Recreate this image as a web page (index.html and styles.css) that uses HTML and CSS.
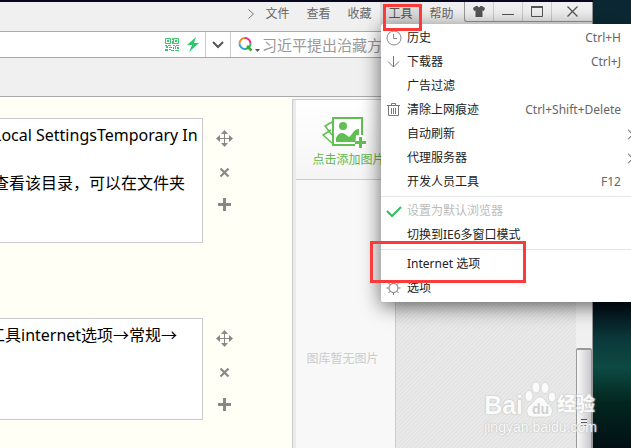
FILE: index.html
```
<!DOCTYPE html>
<html lang="zh-CN">
<head>
	<meta charset="utf-8">
	<title>Internet 选项</title>
	<link rel="stylesheet" href="styles.css">
</head>
<body>
	<svg class="symbols" width="0" height="0">
		<symbol id="move" viewBox="0 0 17 17">
			<path d="M8 3h1v11H8zM3 8h11v1H3zM8.500 0L12 4H5zM8.500 17L5 13h7zM0 8.500L4 5v7zM17 8.500L13 12V5z" fill="#888"/>
		</symbol>
		<symbol id="remove" viewBox="0 0 17 17">
			<path d="M4.500 5.500l8 8M12.500 5.500l-8 8" stroke="#888" stroke-width="2.200"/>
		</symbol>
		<symbol id="add" viewBox="0 0 17 17">
			<path d="M7 2h3v5h5v3h-5v5H7v-5H2V7h5z" fill="#888"/>
		</symbol>
	</svg>

	<div class="window">
		<header class="titlebar">
			<nav class="menubar">
				<svg class="more" width="8" height="12" viewBox="0 0 8 12"><path d="M1.500 1.500L6.500 6l-5 4.500" fill="none" stroke="#777"/></svg>
				<button>文件</button>
				<button>查看</button>
				<button>收藏</button>
				<button class="active">工具</button>
				<button>帮助</button>
			</nav>
			<div class="controls">
				<button aria-label="皮肤"><svg width="12" height="11" viewBox="0 0 12 11"><path d="M3 0h1.500L6 1.500 7.500 0H9l3 2-1 3-1.500-.5V11h-7V4.500L1 5 0 2z" fill="#555"/></svg></button>
				<button aria-label="最小化"><svg width="12" height="11" viewBox="0 0 12 11"><path d="M0 8.500h12" stroke="#555"/></svg></button>
				<button aria-label="最大化"><svg width="12" height="11" viewBox="0 0 12 11"><path d="M.5 1v9.500h11V1M0 1h12" fill="none" stroke="#555"/><path d="M0 1h12" stroke="#555" stroke-width="2"/></svg></button>
				<button aria-label="关闭"><svg width="11" height="11" viewBox="0 0 11 11"><path d="M.5.5l10 10M10.500.5l-10 10" stroke="#555" stroke-width="1.300"/></svg></button>
			</div>
		</header>

		<div class="addressbar">
			<button class="tool" aria-label="二维码">
				<svg width="14" height="13" viewBox="0 0 14 13">
					<path d="M.5.5h5v5h-5zM8.500.5h5v5h-5z" fill="none" stroke="#3ac569"/>
					<path d="M2 2h2v2H2zM10 2h2v2h-2zM0 7h2v1H0zM3 7h3v1H3zM7 0h1v2H7zM7 3h1v3H7zM8 7h2v1H8zM11 7h3v1h-3zM1 8h2v2H1zM4 9h3v1H4zM8 9h1v2H8zM10 8h1v3h-1zM12 9h2v2h-2zM0 11h3v2H0zM4 11h2v1H4zM6 12h3v1H6zM10 12h4v1h-4z" fill="#3ac569"/>
				</svg>
			</button>
			<button class="tool" aria-label="极速模式">
				<svg width="12" height="15" viewBox="0 0 12 15"><path d="M9 0L0 8h5L2 15l10-9H7z" fill="#2dc76d"/></svg>
			</button>
			<button class="dropdown" aria-label="展开">
				<svg width="12" height="8" viewBox="0 0 12 8"><path d="M1 1l5 5 5-5" fill="none" stroke="#555" stroke-width="2"/></svg>
			</button>
			<label class="search">
				<svg width="22" height="15" viewBox="0 0 22 15">
					<g fill="none" stroke-width="2">
						<path d="M7 1a5.500 5.500 0 0 1 5.500 5.500" stroke="#e0308a"/>
						<path d="M12.500 6.500A5.500 5.500 0 0 1 7 12" stroke="#30b34a"/>
						<path d="M7 12a5.500 5.500 0 0 1-5.500-5.500" stroke="#29a4e8"/>
						<path d="M1.500 6.500A5.500 5.500 0 0 1 7 1" stroke="#f58220"/>
						<path d="M9 9l4.500 4.500" stroke="#3aa935" stroke-width="2.500"/>
					</g>
					<path d="M17 12h5l-2.500 3z" fill="#555"/>
				</svg>
				<input type="text" aria-label="搜索" placeholder="习近平提出治藏方略">
			</label>
		</div>
		<div class="toolbar"></div>

		<main class="content">
			<section class="editor">
				<div class="step">
					<textarea class="first" aria-label="步骤一" wrap="off">Local SettingsTemporary In

查看该目录，可以在文件夹</textarea>
					<div class="actions">
						<button aria-label="移动"><svg width="17" height="17"><use href="#move"/></svg></button>
						<button aria-label="删除"><svg width="17" height="17"><use href="#remove"/></svg></button>
						<button aria-label="添加"><svg width="17" height="17"><use href="#add"/></svg></button>
					</div>
				</div>
				<div class="step">
					<textarea class="second" aria-label="步骤二" wrap="off">工具internet选项→常规→</textarea>
					<div class="actions">
						<button aria-label="移动"><svg width="17" height="17"><use href="#move"/></svg></button>
						<button aria-label="删除"><svg width="17" height="17"><use href="#remove"/></svg></button>
						<button aria-label="添加"><svg width="17" height="17"><use href="#add"/></svg></button>
					</div>
				</div>
			</section>

			<aside class="gallery">
				<button class="upload">
					<svg width="44" height="32" viewBox="0 0 44 32">
						<path d="M10 6L3 10l7 9M9 14L1 19l9 8" fill="none" stroke="#5fbf50" stroke-width="1.500"/>
						<path d="M11 2h29v27H11z" fill="#fff" stroke="#5fbf50" stroke-width="2"/>
						<circle cx="21" cy="10" r="4" fill="#5fbf50"/>
						<path d="M14 26v-4c2-5 6-6 9-4l4 3c3-1 4-8 10-8v13z" fill="#5fbf50"/>
						<path d="M34 19h9v13H33z" fill="#fff"/>
						<path d="M37 21h3v4h4v3h-4v4h-3v-4h-4v-3h4z" fill="#5fbf50"/>
					</svg>
					<span>点击添加图片</span>
				</button>
				<p class="empty">图库暂无图片</p>
			</aside>

			<div class="canvas"></div>
			<div class="scrollbar"><div class="thumb"><i></i></div></div>
		</main>
	</div>

	<div class="menu" role="menu">
		<button><svg width="16" height="16" viewBox="0 0 16 16"><circle cx="8" cy="8" r="7" fill="none" stroke="#888"/><path d="M7.500 4v4.500H11" fill="none" stroke="#888"/></svg><span>历史</span><kbd>Ctrl+H</kbd></button>
		<button><svg width="16" height="16" viewBox="0 0 16 16"><path d="M7.500 2v11M2 7.500l5.500 5.500L13 7.500" fill="none" stroke="#777"/></svg><span>下载器</span><kbd>Ctrl+J</kbd></button>
		<button><span>广告过滤</span></button>
		<button><svg width="16" height="16" viewBox="0 0 16 16"><path d="M1 3.500h13M5.500 3V1.500h4V3M2.500 4v9.500h10V4M5.500 6v6M7.500 6v6M9.500 6v6" fill="none" stroke="#777"/></svg><span>清除上网痕迹</span><kbd>Ctrl+Shift+Delete</kbd></button>
		<button class="sub"><span>自动刷新</span></button>
		<button class="sub"><span>代理服务器</span></button>
		<button><span>开发人员工具</span><kbd>F12</kbd></button>
		<hr>
		<button disabled><svg width="16" height="16" viewBox="0 0 16 16"><path d="M1 8l5 5 9-9" fill="none" stroke="#2fc05c" stroke-width="2"/></svg><span>设置为默认浏览器</span></button>
		<button><span>切换到IE6多窗口模式</span></button>
		<hr>
		<button><span>Internet 选项</span></button>
		<button><svg width="16" height="16" viewBox="0 0 16 16"><circle cx="7.500" cy="8" r="4.500" fill="none" stroke="#777"/><path d="M7.500 1v2M7.500 13v2M.5 8h2M12.500 8h2M2.500 3l2 2M12.500 3l-2 2M2.500 13l2-2M12.500 13l-2-2" stroke="#777"/></svg><span>选项</span></button>
	</div>

	<div class="mark mark-tools"></div>
	<div class="mark mark-internet"></div>

	<div class="watermark">
		<div class="brand">
			<b>Bai</b>
			<span class="paw">
				<svg width="32" height="38" viewBox="0 0 32 38">
					<g fill="#fff" stroke="#ccc" stroke-width=".7">
						<ellipse cx="5" cy="15" rx="4" ry="5.500"/>
						<ellipse cx="12" cy="6.500" rx="4" ry="5.500"/>
						<ellipse cx="21" cy="7" rx="4" ry="5.500"/>
						<ellipse cx="28" cy="16" rx="3.700" ry="5"/>
						<path d="M16 16c4 0 5 4 8 7 4 3 5 6 4 9-1 5-6 4-12 4S4 37 3 32c-1-4 1-6 4-9 4-3 5-7 9-7z"/>
					</g>
				</svg>
				<em>du</em>
			</span>
			<b class="cn">经验</b>
		</div>
		<div class="site">jingyan.baidu.com</div>
	</div>
</body>
</html>
```
FILE: styles.css
```
* {
	box-sizing: border-box;
	margin: 0;
	padding: 0;
}

body {
	position: relative;
	height: 100vh;
	overflow: hidden;
	padding: 2px 38px 0 0;
	background: linear-gradient(#0b2733 0, #0b3038 10%, #020f18 68%, #0c3a3c 76%, #0c4a42 82%, #02261f 90%, #021015 100%);
	font: 12px/24px "Noto Sans", "Noto Sans CJK SC", sans-serif;
}

button, input, textarea, kbd {
	font: inherit;
	color: inherit;
	border: none;
	background: none;
}

button {
	cursor: pointer;
}

.symbols {
	position: absolute;
}

.window {
	display: flex;
	flex-flow: column;
	height: 100%;
	background: #f0f0f0;
	border-right: 1px solid #999;
	box-shadow: 0 -2px 0 #070720;
}

.titlebar {
	display: flex;
	justify-content: flex-end;
	align-items: flex-start;
	gap: 2px;
	height: 30px;
	border-bottom: 1px solid #aaa;
	color: #666;
}

.menubar {
	display: flex;
	align-items: center;
}

.more {
	margin-right: 2px;
}

.menubar button {
	width: 41px;
}

.menubar .active {
	background: #dedede;
	color: #555;
}

.controls {
	display: flex;
	height: 20px;
	border: 1px solid #999;
	border-width: 0 0 1px 1px;
	border-radius: 0 0 0 3px;
}

.controls button {
	display: flex;
	align-items: center;
	justify-content: center;
	width: 29px;
	border-right: 1px solid #ccc;
}

.controls button:last-child {
	width: 40px;
	border: none;
}

.addressbar {
	display: flex;
	justify-content: flex-end;
	height: 26px;
	background: #fff;
	border-bottom: 1px solid #aaa;
}

.addressbar button {
	display: flex;
	align-items: center;
	justify-content: center;
}

.tool {
	width: 21px;
}

.addressbar .dropdown {
	width: 26px;
	margin-left: 2px;
	border: 1px solid #ccc;
	border-width: 0 1px;
}

.search {
	display: flex;
	align-items: center;
	gap: 2px;
	width: 361px;
	padding-left: 7px;
}

.search input {
	flex: 1;
	font-size: 15px;
}

.search input::placeholder {
	color: #999;
}

.toolbar {
	height: 39px;
	border-bottom: 1px solid #aaa;
}

.content {
	display: flex;
	flex: 1;
	min-height: 0;
	background: #f8f8f8;
}

.editor {
	flex: 1;
	min-width: 0;
	padding-top: 21px;
	background: #fffff5;
	overflow: hidden;
}

.step {
	display: flex;
	margin-bottom: 75px;
}

.step textarea {
	flex: 1;
	min-width: 0;
	height: 125px;
	margin-left: -12px;
	padding: 4px 0 0 4px;
	border: 1px solid #ccc;
	background: #fff;
	color: #000;
	font-size: 16px;
	resize: none;
	overflow: hidden;
}

.step .second {
	height: 102px;
	padding-left: 0;
}

.actions {
	display: flex;
	flex-flow: column;
	gap: 16px;
	width: 89px;
	padding: 12px 0 0 13px;
}

.actions button {
	width: 17px;
	height: 17px;
}

.actions svg {
	display: block;
}

.gallery {
	width: 104px;
	margin-top: 2px;
	border: 1px solid #ccc;
	border-width: 1px 1px 0 1px;
	box-shadow: inset 3px 0 #ebebeb;
	padding-left: 3px;
	text-align: center;
	white-space: nowrap;
}

.upload {
	display: flex;
	flex-flow: column;
	align-items: center;
	width: 100%;
	height: 80px;
	padding: 16px 0 0 6px;
	border-bottom: 1px solid #ccc;
	background: linear-gradient(#fff, #f5f5f5);
	color: #5fb74e;
}

.upload svg {
	margin-right: 10px;
}

.empty {
	padding: 167px 6px 0 0;
	color: #ccc;
}

.canvas {
	width: 180px;
	background: repeating-linear-gradient(135deg, #e3e3e3 0, #e3e3e3 1px, #ebebeb 2px, #e5e5e5 3px);
}

.scrollbar {
	width: 16px;
	padding-top: 251px;
	background: #f0f0f0;
}

.thumb {
	display: flex;
	justify-content: center;
	height: 100%;
	padding-top: 69px;
	border: 1px solid #999;
	border-width: 2px 1px 0 1px;
	border-radius: 2px 2px 0 0;
	background: linear-gradient(90deg, #f8f8f8, #e4e4e6 45%, #c8c8cc);
}

.thumb i {
	width: 6px;
	height: 9px;
	background: repeating-linear-gradient(#555 0, #555 1px, #eee 1px, #eee 3px);
}

.menu {
	position: absolute;
	top: 24px;
	right: -8px;
	width: 258px;
	padding: 2px 0;
	border-radius: 2px;
	background: #fff;
	box-shadow: 0 4px 20px rgba(0, 0, 0, 0.6);
	color: #222;
}

.menu button {
	position: relative;
	display: flex;
	align-items: center;
	width: 100%;
	height: 24px;
	padding: 0 18px 0 26px;
	white-space: nowrap;
}

.menu button:disabled {
	color: #bbb;
}

.menu svg {
	position: absolute;
	left: 5px;
	top: 4px;
}

.menu kbd {
	margin-left: auto;
	color: #666;
}

.menu .sub {
	padding-right: 7px;
}

.sub::after {
	content: "";
	width: 6px;
	height: 6px;
	margin-left: auto;
	border: 1px solid #777;
	border-width: 1px 1px 0 0;
	transform: rotate(45deg);
}

.menu hr {
	margin: 2px 0;
	border: none;
	border-top: 1px solid #e5e5e5;
}

.mark {
	position: absolute;
	border: 3px solid #fc3a3a;
}

.mark-tools {
	top: 4px;
	right: 209px;
	width: 39px;
	height: 27px;
}

.mark-internet {
	top: 241px;
	right: 105px;
	width: 156px;
	height: 42px;
}

.watermark {
	position: absolute;
	top: 380px;
	right: 34px;
	color: #fff;
	text-shadow: 0 0 1px #aaa, 0 0 2px #ccc;
	opacity: 0.85;
}

.brand {
	display: flex;
	align-items: flex-end;
	gap: 1px;
	height: 39px;
	font: bold 25px/28px "Liberation Sans", "Noto Sans CJK SC", sans-serif;
}

.brand .cn {
	font-size: 19px;
}

.paw {
	position: relative;
	height: 38px;
}

.paw svg {
	display: block;
}

.paw em {
	position: absolute;
	left: 8px;
	bottom: 2px;
	color: #ccc;
	font: bold 14px/16px "Liberation Sans", sans-serif;
	text-shadow: none;
}

.site {
	font: 14px/16px "Liberation Sans", sans-serif;
}
```
